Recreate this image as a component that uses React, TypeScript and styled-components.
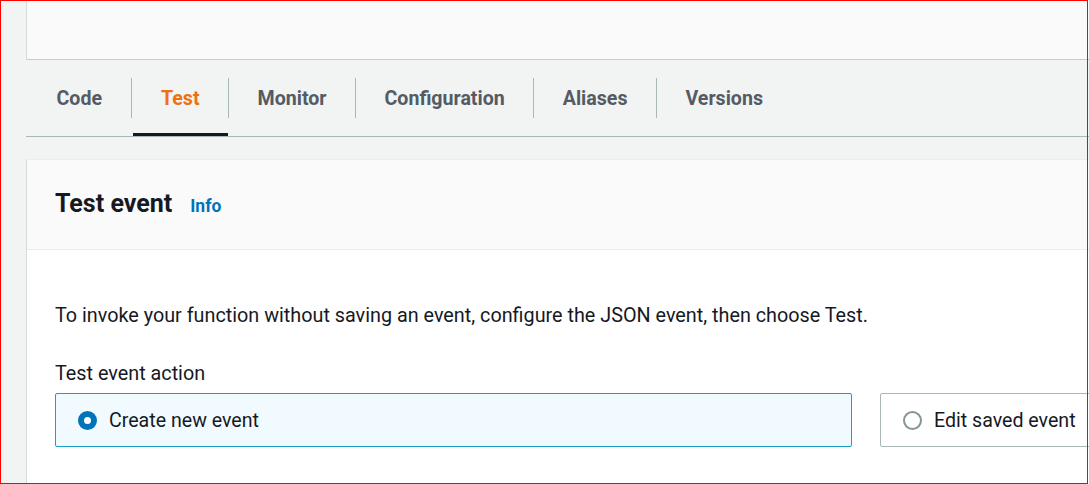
import React from 'react'
import styled, { createGlobalStyle } from 'styled-components'

const GlobalStyle = createGlobalStyle`
  html, body {
    margin: 0;
    padding: 0;
    overflow: hidden;
    background: #f2f3f3;
  }
  body {
    font-family: Roboto, 'Noto Sans', Arial, sans-serif;
    color: #16191f;
  }
  * {
    box-sizing: border-box;
  }
`

const Frame = styled.div`
  position: fixed;
  inset: 0 1px 0 0;
  border: 1px solid #ff0000;
  pointer-events: none;
  z-index: 10;
`

const Page = styled.div`
  padding-left: 26px;
  width: 1760px;
`

const Content = styled.main`
  width: 1679px;
`

const TopCard = styled.section`
  height: 60px;
  background: #fafafa;
  border-left: 1px solid #d5dbdb;
  border-bottom: 1px solid #c6cccc;
`

const TabList = styled.nav`
  display: flex;
  align-items: center;
  height: 77px;
  padding-left: 2px;
  border-bottom: 1px solid #aab7b8;
`

const Tab = styled.div<{ $active?: boolean }>`
  display: flex;
  align-items: center;
  height: 76px;
  padding: 0 28.5px;
  font-size: 19.6px;
  font-weight: 700;
  color: ${p => (p.$active ? '#ec7211' : '#545b64')};
  box-shadow: ${p => (p.$active ? 'inset 0 -3px 0 #16191f' : 'none')};
  margin-left: ${p => (p.$active ? '1px' : '0')};
`

const Divider = styled.span`
  width: 1px;
  height: 40px;
  background: #aab7b8;
`

const Panel = styled.section`
  margin-top: 22px;
  background: #ffffff;
  border-top: 1px solid #eaeded;
  border-left: 1px solid #d5dbdb;
`

const PanelHeader = styled.header`
  display: flex;
  align-items: baseline;
  gap: 18px;
  height: 90px;
  padding: 28px 28px 0;
  background: #fafafa;
  border-bottom: 1px solid #eaeded;
`

const Title = styled.h2`
  margin: 0;
  font-size: 25px;
  font-weight: 700;
  line-height: 32px;
`

const InfoLink = styled.a`
  font-size: 17.5px;
  font-weight: 700;
  color: #0073bb;
  text-decoration: none;
`

const PanelBody = styled.div`
  padding: 54px 28px 40px;
`

const Description = styled.p`
  margin: 0;
  font-size: 19.8px;
  line-height: 24px;
`

const FieldLabel = styled.div`
  margin-top: 34px;
  font-size: 19.8px;
  line-height: 24px;
`

const TileGrid = styled.div`
  display: grid;
  grid-template-columns: 1fr 1fr;
  gap: 28px;
  margin-top: 7px;
`

const Tile = styled.label<{ $selected?: boolean }>`
  display: flex;
  align-items: center;
  gap: 12px;
  height: 54px;
  padding-left: 22px;
  border: 1px solid ${p => (p.$selected ? '#19a0c9' : '#aab7b8')};
  border-radius: 2px;
  background: ${p => (p.$selected ? '#f1faff' : '#ffffff')};
  font-size: 19.6px;
`

const Radio = styled.span<{ $checked?: boolean }>`
  flex: none;
  width: 19px;
  height: 19px;
  border-radius: 50%;
  background: #ffffff;
  border: ${p => (p.$checked ? '6px solid #0073bb' : '2px solid #879596')};
`

const tabs = ['Code', 'Test', 'Monitor', 'Configuration', 'Aliases', 'Versions']

export default function App() {
  return (
    <>
      <GlobalStyle />
      <Frame />
      <Page>
        <Content>
          <TopCard />

          <TabList>
            {tabs.map((name, i) => (
              <React.Fragment key={name}>
                {i > 0 && <Divider />}
                <Tab $active={name === 'Test'}>{name}</Tab>
              </React.Fragment>
            ))}
          </TabList>

          <Panel>
            <PanelHeader>
              <Title>Test event</Title>
              <InfoLink href="#">Info</InfoLink>
            </PanelHeader>

            <PanelBody>
              <Description>
                To invoke your function without saving an event, configure the JSON event, then
                choose Test.
              </Description>
              <FieldLabel>Test event action</FieldLabel>
              <TileGrid>
                <Tile $selected>
                  <Radio $checked />
                  Create new event
                </Tile>
                <Tile>
                  <Radio />
                  Edit saved event
                </Tile>
              </TileGrid>
            </PanelBody>
          </Panel>
        </Content>
      </Page>
    </>
  )
}
